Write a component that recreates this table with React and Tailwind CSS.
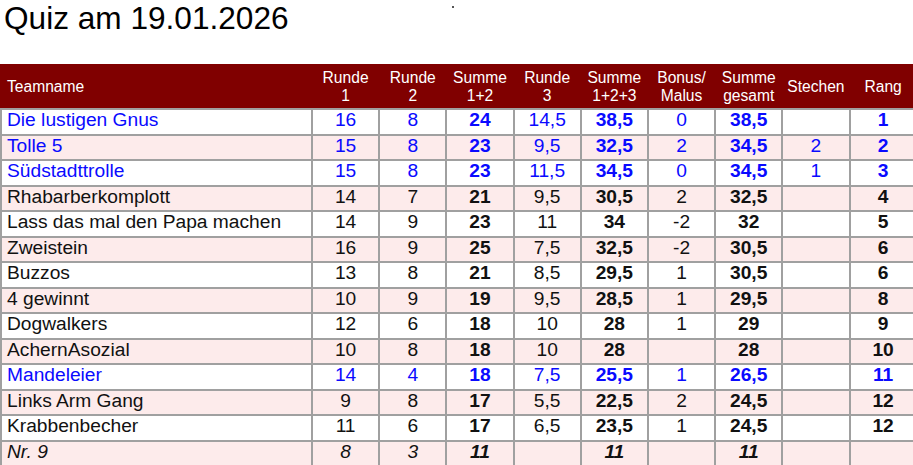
import React from "react";

const ROWS = [
    { name: "Die lustigen Gnus", v: ["16", "8", "24", "14,5", "38,5", "0", "38,5", "", "1"], blue: true },
    { name: "Tolle 5", v: ["15", "8", "23", "9,5", "32,5", "2", "34,5", "2", "2"], blue: true },
    { name: "Südstadttrolle", v: ["15", "8", "23", "11,5", "34,5", "0", "34,5", "1", "3"], blue: true },
    { name: "Rhabarberkomplott", v: ["14", "7", "21", "9,5", "30,5", "2", "32,5", "", "4"] },
    { name: "Lass das mal den Papa machen", v: ["14", "9", "23", "11", "34", "-2", "32", "", "5"] },
    { name: "Zweistein", v: ["16", "9", "25", "7,5", "32,5", "-2", "30,5", "", "6"] },
    { name: "Buzzos", v: ["13", "8", "21", "8,5", "29,5", "1", "30,5", "", "6"] },
    { name: "4 gewinnt", v: ["10", "9", "19", "9,5", "28,5", "1", "29,5", "", "8"] },
    { name: "Dogwalkers", v: ["12", "6", "18", "10", "28", "1", "29", "", "9"] },
    { name: "AchernAsozial", v: ["10", "8", "18", "10", "28", "", "28", "", "10"] },
    { name: "Mandeleier", v: ["14", "4", "18", "7,5", "25,5", "1", "26,5", "", "11"], blue: true },
    { name: "Links Arm Gang", v: ["9", "8", "17", "5,5", "22,5", "2", "24,5", "", "12"] },
    { name: "Krabbenbecher", v: ["11", "6", "17", "6,5", "23,5", "1", "24,5", "", "12"] },
    { name: "Nr. 9", v: ["8", "3", "11", "", "11", "", "11", "", ""], italic: true },
];

const HEADERS = [
    ["Runde", "1"],
    ["Runde", "2"],
    ["Summe", "1+2"],
    ["Runde", "3"],
    ["Summe", "1+2+3"],
    ["Bonus/", "Malus"],
    ["Summe", "gesamt"],
    ["Stechen"],
    ["Rang"],
];

// columns that are printed bold
const BOLD = [2, 4, 6, 8];

export default function App() {
    return (
        <div
            className="w-screen h-screen overflow-hidden bg-white text-black"
            style={{ fontFamily: '"Liberation Sans", Arial, sans-serif' }}
        >
            <div className="flex items-start h-[64px]">
                <h1 className="pl-[4px] text-[31.6px] leading-[36px] text-black">Quiz am 19.01.2026</h1>
                <span className="ml-[163px] mt-[6px] w-[2px] h-[2px] bg-[#555]" />
            </div>

            <table className="table-fixed border-collapse w-[916px]">
                <colgroup>
                    <col className="w-[311px]" />
                    {HEADERS.map((_, i) => (
                        <col key={i} className="w-[67.2px]" />
                    ))}
                </colgroup>
                <thead>
                    <tr className="h-[44px] bg-[#800000] text-white text-[15.6px] leading-[18px]">
                        <th className="text-left font-normal pl-[5px] border-2 border-[#800000] border-b-[#a0a0a0]">
                            Teamname
                        </th>
                        {HEADERS.map((h, i) => (
                            <th
                                key={i}
                                className="font-normal text-center px-0 border-2 border-[#800000] border-b-[#a0a0a0]"
                            >
                                {h.map((line, j) => (
                                    <div key={j}>{line}</div>
                                ))}
                            </th>
                        ))}
                    </tr>
                </thead>
                <tbody className="text-[19.2px] leading-[19px]">
                    {ROWS.map((r, ri) => (
                        <tr
                            key={ri}
                            className={`h-[25.5px] ${ri % 2 === 1 ? "bg-[#fdebeb]" : "bg-white"} ${
                                r.blue ? "text-[#0a0aff]" : "text-[#111]"
                            } ${r.italic ? "italic" : ""}`}
                        >
                            <td className="align-top pl-[5px] py-0 whitespace-nowrap border-2 border-[#a0a0a0]">
                                {r.name}
                            </td>
                            {r.v.map((val, ci) => (
                                <td
                                    key={ci}
                                    className={`align-top text-center py-0 border-2 border-[#a0a0a0] ${
                                        BOLD.includes(ci) || (r.italic && val) ? "font-bold" : ""
                                    } ${r.italic && (ci === 0 || ci === 1) ? "font-normal" : ""}`}
                                >
                                    {val}
                                </td>
                            ))}
                        </tr>
                    ))}
                </tbody>
            </table>
        </div>
    );
}
